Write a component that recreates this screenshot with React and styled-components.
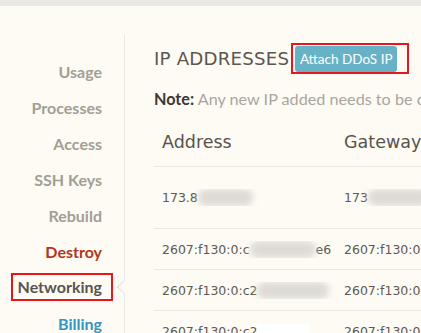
import React from 'react'
import styled, { createGlobalStyle } from 'styled-components'

const GlobalStyle = createGlobalStyle`
  html, body {
    margin: 0;
    padding: 0;
    background: #fdfbf4;
    overflow: hidden;
  }
  body {
    font-family: Lato, "Open Sans", sans-serif;
  }
`;

const TopBar = styled.div`
  height: 6px;
  background: #e9e8e4;
`;

const Page = styled.div`
  display: flex;
  padding-top: 29px;
  height: 298px;
  overflow: hidden;
`;

const Sidebar = styled.nav`
  width: 124px;
  flex-shrink: 0;
  border-right: 1px solid #ebe8e1;
  padding-top: 18px;
  display: flex;
  flex-direction: column;
  align-items: flex-end;
`;

const NavItem = styled.div`
  position: relative;
  flex-shrink: 0;
  height: 36px;
  width: 100%;
  display: flex;
  align-items: center;
  justify-content: flex-end;
  padding-right: 22px;
  box-sizing: border-box;
  font-size: 16px;
  font-weight: 700;
  color: ${({ $color }) => $color || '#a39e95'};
`;

const Label = styled.span`
  ${({ $boxed }) => $boxed && `
    border: 2px solid #e8161b;
    padding: 2px 9px 3px 5px;
    margin-right: -11px;
  `}
`;

const Notch = styled.span`
  position: absolute;
  right: -1px;
  top: 50%;
  width: 9px;
  height: 9px;
  background: #fdfbf4;
  border-left: 1px solid #e6e3dc;
  border-bottom: 1px solid #e6e3dc;
  transform: translate(4px, -50%) rotate(45deg);
`;

const Content = styled.main`
  flex: 1;
  padding-left: 29px;
  min-width: 0;
  overflow: hidden;
`;

const HeadRow = styled.div`
  display: flex;
  align-items: center;
  margin-top: 6px;
  height: 34px;
`;

const Heading = styled.h2`
  margin: 0;
  font-family: "DejaVu Sans", sans-serif;
  font-weight: 400;
  font-size: 18.2px;
  letter-spacing: 0.2px;
  color: #5b5650;
  white-space: nowrap;
`;

const Highlight = styled.div`
  border: 2px solid #e8161b;
  padding: 1px 10px 0 2px;
  margin-left: 2px;
  flex-shrink: 0;
`;

const Button = styled.button`
  border: none;
  border-radius: 3px;
  background: #67b2c6;
  color: #fff;
  font-family: Lato, sans-serif;
  font-size: 13.5px;
  height: 26px;
  width: 102px;
  padding: 0;
  cursor: pointer;
`;

const Note = styled.p`
  margin: 14px 0 0;
  font-size: 16.2px;
  color: #aaa59e;
  white-space: nowrap;
  b {
    color: #3b3834;
  }
`;

const Table = styled.div`
  margin-top: 12px;
  width: 400px;
`;

const Row = styled.div`
  display: grid;
  grid-template-columns: 182px 1fr;
  align-items: center;
  box-sizing: border-box;
  height: ${({ $h }) => $h}px;
  border-bottom: 1px solid #ece9e2;
  white-space: nowrap;
`;

const HeadCell = styled.div`
  padding-left: 8px;
  font-family: "DejaVu Sans", sans-serif;
  font-size: 17.5px;
  color: #58534d;
  padding-bottom: 2px;
`;

const Cell = styled.div`
  padding-left: 8px;
  font-family: "DejaVu Sans", sans-serif;
  font-size: 12.5px;
  color: #5e5952;
  display: flex;
  align-items: center;
  overflow: hidden;
`;

const Blur = styled.span`
  display: inline-block;
  width: ${({ $w }) => $w}px;
  height: 17px;
  background: #dedbd6;
  filter: blur(3px);
  border-radius: 8px;
`;

const WhiteBlock = styled.span`
  display: inline-block;
  width: 52px;
  height: 24px;
  background: #fff;
  margin-top: 10px;
`;

const nav = [
  { label: 'Usage' },
  { label: 'Processes' },
  { label: 'Access' },
  { label: 'SSH Keys' },
  { label: 'Rebuild' },
  { label: 'Destroy', color: '#b0371c' },
  { label: 'Networking', color: '#58544f', active: true },
  { label: 'Billing', color: '#3594c1' },
];

const App = () => {
  return (
    <>
      <GlobalStyle />
      <TopBar />
      <Page>
        <Sidebar>
          {nav.map((n) => (
            <NavItem key={n.label} $color={n.color}>
              <Label $boxed={n.active}>{n.label}</Label>
              {n.active && <Notch />}
            </NavItem>
          ))}
        </Sidebar>
        <Content>
          <HeadRow>
            <Heading>IP ADDRESSES</Heading>
            <Highlight>
              <Button>Attach DDoS IP</Button>
            </Highlight>
          </HeadRow>
          <Note>
            <b>Note:</b> Any new IP added needs to be configured
          </Note>
          <Table>
            <Row $h={47}>
              <HeadCell>Address</HeadCell>
              <HeadCell>Gateway</HeadCell>
            </Row>
            <Row $h={62}>
              <Cell>173.8<Blur $w={55} /></Cell>
              <Cell>173<Blur $w={60} /></Cell>
            </Row>
            <Row $h={41}>
              <Cell>2607:f130:0:c<Blur $w={66} />e6</Cell>
              <Cell>2607:f130:0:c</Cell>
            </Row>
            <Row $h={41}>
              <Cell>2607:f130:0:c2<Blur $w={72} /></Cell>
              <Cell>2607:f130:0:c</Cell>
            </Row>
            <Row $h={41}>
              <Cell>2607:f130:0:c2<WhiteBlock /></Cell>
              <Cell>2607:f130:0:c</Cell>
            </Row>
          </Table>
        </Content>
      </Page>
    </>
  );
};

export default App;
